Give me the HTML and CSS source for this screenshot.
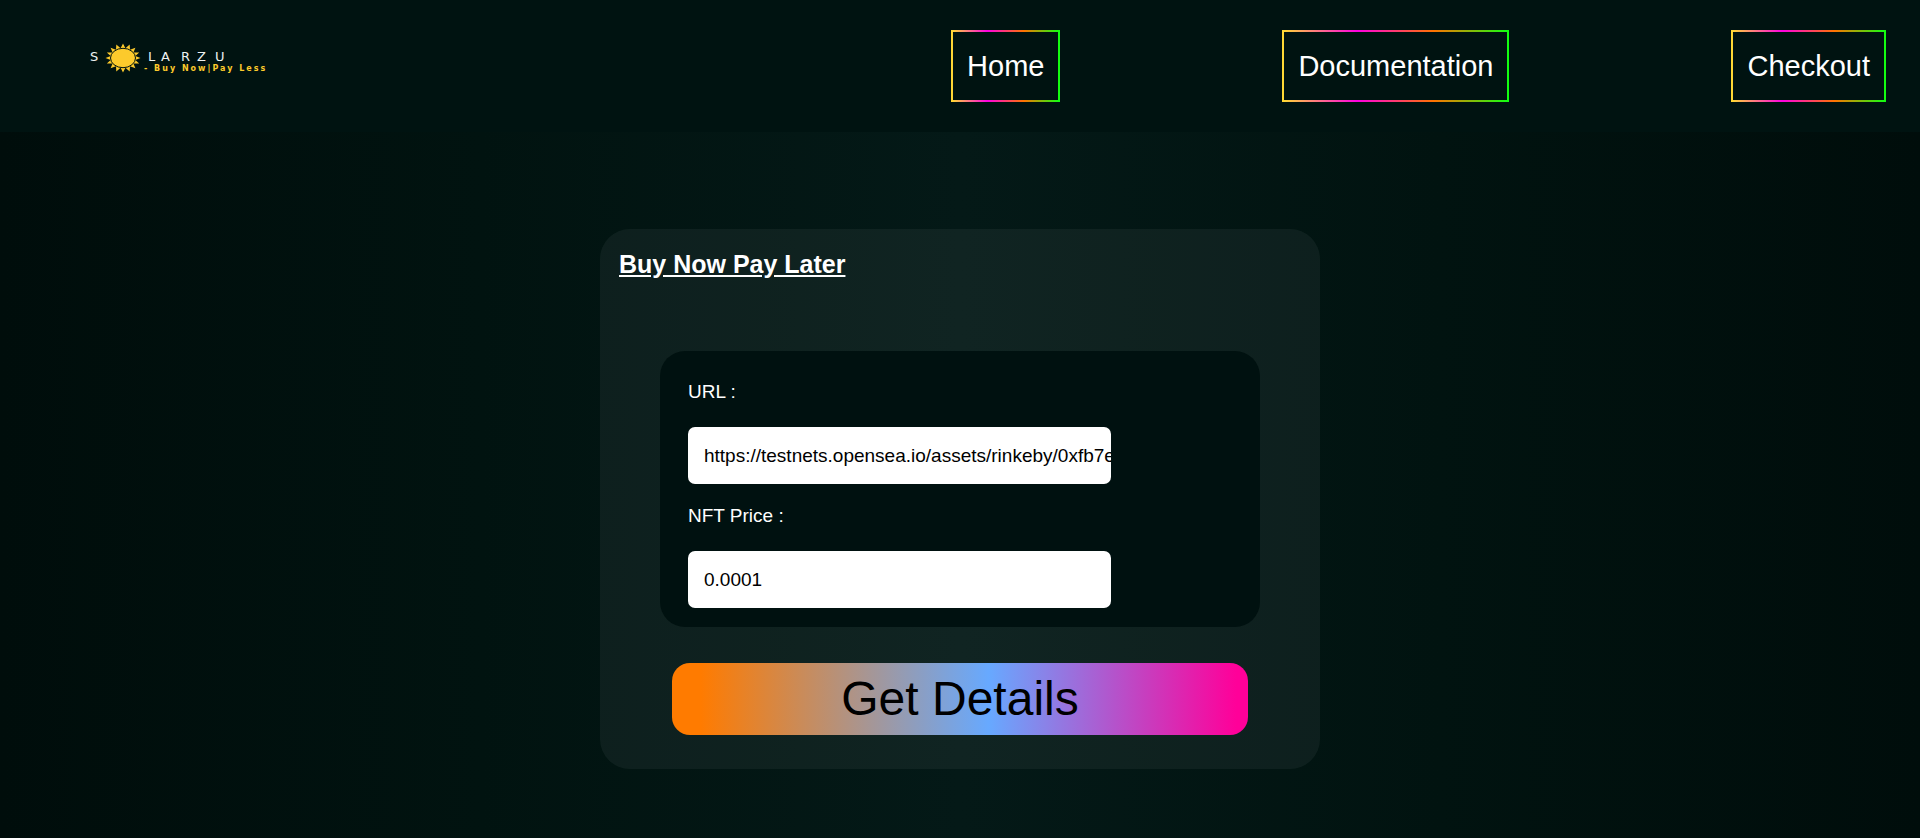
FILE: index.html
```
<!DOCTYPE html>
<html lang="en">
<head>
  <meta charset="UTF-8" />
  <title>Solarzu</title>
  <link rel="stylesheet" href="styles.css">
</head>
<body>

  <!-- Header -->
  <header>
    <a href="#" class="logo" aria-label="Solarzu">
      <svg width="190" height="36" viewBox="0 0 190 36">
        <text x="0 58 71 91 107 125" y="21" class="logo-name">SLARZU</text>
        <!-- sun -->
        <path fill="#fcca2c" d="M50.5 18L45.3 20L49.2 23.5L43.4 23.6L45.4 28.3L40 26.3L39.7 31.4L35.4 27.8L33 32.5L30.6 27.8L26.3 31.4L26 26.3L20.6 28.3L22.6 23.6L16.8 23.5L20.7 20L15.5 18L20.7 16L16.8 12.5L22.6 12.4L20.6 7.7L26 9.7L26.3 4.6L30.6 8.2L33 3.5L35.4 8.2L39.7 4.6L40 9.7L45.4 7.7L43.4 12.4L49.2 12.5L45.3 16Z" />
        <ellipse cx="33" cy="18" rx="12.5" ry="9.7" fill="#fcca2c" stroke="#001311" stroke-width="1" />
        <text x="54" y="31" class="logo-tag">- Buy Now|Pay Less</text>
      </svg>
    </a>
    <nav>
      <a href="#">Home</a>
      <a href="#">Documentation</a>
      <a href="#">Checkout</a>
    </nav>
  </header>

  <main>
    <form class="card">
      <h1>Buy Now Pay Later</h1>
      <div class="fields">
        <label for="url">URL :</label>
        <input type="text" id="url" value="https://testnets.opensea.io/assets/rinkeby/0xfb7e" />
        <label for="price">NFT Price :</label>
        <input type="text" id="price" value="0.0001" />
      </div>
      <button type="button">Get Details</button>
    </form>
  </main>

</body>
</html>
```
FILE: styles.css
```
* { margin: 0; padding: 0; box-sizing: border-box; }

body {
  min-height: 100vh;
  display: flex;
  flex-direction: column;
  font-family: "Liberation Sans", Arial, sans-serif;
  color: white;
  background: linear-gradient(to right, #000d0b, #011310 25%, #041917 50%, #011310 75%, #000d0b);
}

header {
  display: flex;
  justify-content: space-between;
  align-items: center;
  padding: 30px 34px 30px 90px;
  background-color: #001311;
}

.logo svg {
  display: block;
  margin-bottom: 16px;
}

.logo-name {
  font-family: "DejaVu Sans", sans-serif;
  font-size: 13px;
  fill: #eef2f1;
}

.logo-tag {
  font-family: "DejaVu Sans", sans-serif;
  font-size: 8px;
  font-weight: bold;
  letter-spacing: 2px;
  fill: #fcca2c;
}

nav {
  display: flex;
  gap: 222px;
}

nav a {
  padding: 17px 14px;
  font-size: 29px;
  line-height: 34px;
  color: white;
  text-decoration: none;
  border: 2px solid;
  border-image: linear-gradient(to right, #ffda33, #ff00e1 33%, #ff7300 67%, #11ff11) 1;
}

main {
  flex: 1;
  display: flex;
  justify-content: center;
  align-items: flex-start;
  padding: 97px 20px 20px;
}

.card {
  width: 720px;
  padding: 20px 60px 34px;
  border-radius: 30px;
  background-color: rgba(255, 255, 255, 0.05);
}

.card h1 {
  margin: 0 -41px 72px;
  font-size: 25px;
  line-height: 30px;
  text-decoration: underline;
}

.fields {
  padding: 30px 28px 19px;
  border-radius: 25px;
  background-color: #001110;
}

.fields label {
  display: block;
  margin-bottom: 24px;
  font-size: 19px;
  line-height: 22px;
}

.fields input {
  display: block;
  width: 423px;
  max-width: 100%;
  height: 57px;
  padding-left: 16px;
  border: none;
  border-radius: 7px;
  font-family: inherit;
  font-size: 19px;
  color: black;
  background-color: white;
}

.fields input + label {
  margin-top: 21px;
}

.card button {
  display: block;
  width: 96%;
  height: 72px;
  margin: 36px auto 0;
  padding-bottom: 2px;
  border: none;
  border-radius: 18px;
  font-family: inherit;
  font-size: 48px;
  color: black;
  background: linear-gradient(to right, #ff7b00 5%, #67a9ff 55%, #ff0099 98%);
  cursor: pointer;
}
```
